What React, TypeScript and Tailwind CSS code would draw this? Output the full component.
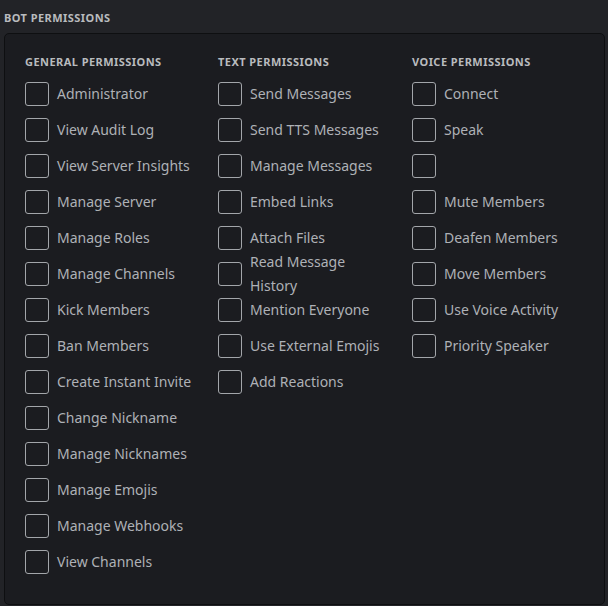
import React from "react";

const general = [
  "Administrator",
  "View Audit Log",
  "View Server Insights",
  "Manage Server",
  "Manage Roles",
  "Manage Channels",
  "Kick Members",
  "Ban Members",
  "Create Instant Invite",
  "Change Nickname",
  "Manage Nicknames",
  "Manage Emojis",
  "Manage Webhooks",
  "View Channels",
];
const text = [
  "Send Messages",
  "Send TTS Messages",
  "Manage Messages",
  "Embed Links",
  "Attach Files",
  "Read Message History",
  "Mention Everyone",
  "Use External Emojis",
  "Add Reactions",
];
const voice = [
  "Connect",
  "Speak",
  "",
  "Mute Members",
  "Deafen Members",
  "Move Members",
  "Use Voice Activity",
  "Priority Speaker",
];

function Column({ title, items }: { title: string; items: string[] }) {
  return (
    <div className="flex flex-col">
      <div className="h-4 text-[11px] leading-4 font-bold tracking-[0.45px] text-[#b9bbbe]">
        {title}
      </div>
      <div className="mt-3 flex flex-col gap-3">
        {items.map((label, i) => (
          <div key={i} className="flex h-6 items-center gap-2">
            <div className="h-6 w-6 shrink-0 rounded-[3px] border border-[#a3a6aa]" />
            <span className="-mt-px max-w-[142px] text-[14px] leading-6 text-[#aeb1b6]">
              {label}
            </span>
          </div>
        ))}
      </div>
    </div>
  );
}

export default function App() {
  return (
    <div
      className="h-[606px] w-[608px] bg-[#222327] pl-1 pr-[3px] pt-[10px]"
      style={{ fontFamily: '"Noto Sans", "Open Sans", sans-serif' }}
    >
      <div className="h-4 text-[11px] leading-4 font-bold tracking-[0.45px] text-[#b9bbbe]">
        BOT PERMISSIONS
      </div>
      <div className="mt-[7px] rounded-[5px] border border-[#0e0f11] bg-[#1b1c20] pl-5 pt-5 pb-[30px]">
        <div className="grid grid-cols-[193px_194px_1fr]">
          <Column title="GENERAL PERMISSIONS" items={general} />
          <Column title="TEXT PERMISSIONS" items={text} />
          <Column title="VOICE PERMISSIONS" items={voice} />
        </div>
      </div>
    </div>
  );
}
